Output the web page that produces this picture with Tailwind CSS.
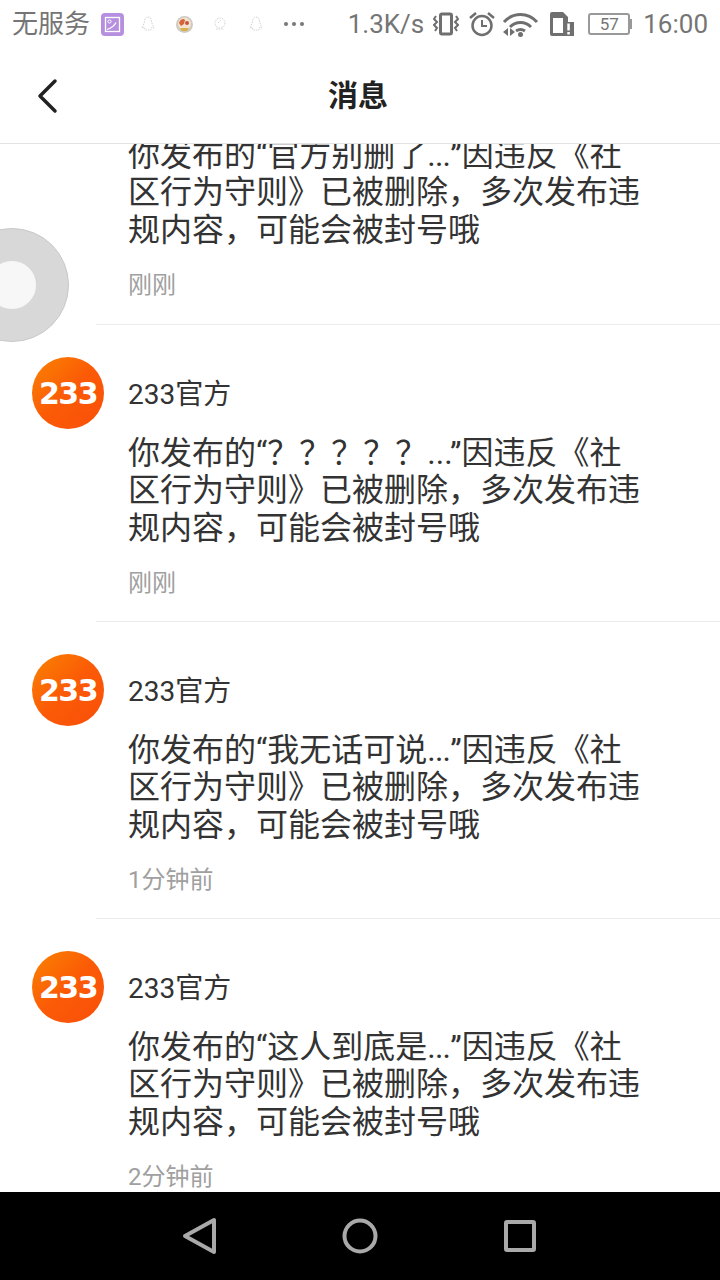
<!DOCTYPE html>
<html lang="zh-CN">
<head>
  <meta charset="UTF-8">
  <meta name="viewport" content="width=device-width, initial-scale=1.0">
  <title>消息</title>
  <script src="https://cdn.jsdelivr.net/npm/@tailwindcss/browser@4"></script>
</head>
<body class="bg-white font-['Roboto','Noto_Sans_CJK_SC',sans-serif] text-[#333]">
  <div class="relative w-[720px] h-[1280px] flex flex-col overflow-hidden">

    <!-- Status bar -->
    <div class="h-12 shrink-0 flex items-center justify-between pl-3 pr-3 text-[#757575] text-[26px]">
      <div class="flex items-center">
        <span>无服务</span>
        <svg class="ml-[11px] w-[23px] h-[23px]" viewBox="0 0 23 23">
          <rect x="0" y="0" width="23" height="23" rx="4" fill="#b78fe0"/>
          <rect x="4.500" y="4.500" width="14" height="14" fill="none" stroke="#fff" stroke-width="1.300"/>
          <circle cx="8.500" cy="8.500" r="1.600" fill="none" stroke="#fff" stroke-width="1"/>
          <path d="M6 16.500c3-1 7-3 9-7" fill="none" stroke="#fff" stroke-width="1.300"/>
        </svg>
        <svg class="ml-[17px] w-[14px] h-[16px]" viewBox="0 0 14 16" fill="none" stroke="#d4d4d4" stroke-dasharray="1.500 1">
          <path d="M7 1c2.500 0 3.500 2 3.500 5l2.500 6-2.500-.5-.5 2.500H4l-.5-2.500-2.500.5 2.500-6C3.500 3 4.500 1 7 1z"/>
        </svg>
        <svg class="ml-[21px] w-[17px] h-[17px]" viewBox="0 0 17 17">
          <circle cx="8.500" cy="8.500" r="8.500" fill="#cfcabf"/>
          <circle cx="8.500" cy="8" r="6.500" fill="#f3e4d2"/>
          <path d="M3 7c1-4 5-5 6-3l-1 4-3 2z" fill="#d8643a"/>
          <circle cx="11" cy="7" r="2" fill="#c9553a"/>
          <path d="M4 12h9l-2 3H6z" fill="#d9b24a"/>
        </svg>
        <svg class="ml-[20px] w-[14px] h-[16px]" viewBox="0 0 14 16" fill="none" stroke="#d4d4d4" stroke-dasharray="1.500 1">
          <circle cx="7" cy="7" r="5"/><path d="M5 7l3-3M3 13h8"/>
        </svg>
        <svg class="ml-[22px] w-[14px] h-[16px]" viewBox="0 0 14 16" fill="none" stroke="#d4d4d4" stroke-dasharray="1.500 1">
          <path d="M7 1c2.500 0 3.500 2 3.500 5l2.500 6-2.500-.5-.5 2.500H4l-.5-2.500-2.500.5 2.500-6C3.500 3 4.500 1 7 1z"/>
        </svg>
        <div class="ml-[21px] flex gap-[4px]">
          <div class="w-[4px] h-[4px] rounded-full bg-[#777]"></div>
          <div class="w-[4px] h-[4px] rounded-full bg-[#777]"></div>
          <div class="w-[4px] h-[4px] rounded-full bg-[#777]"></div>
        </div>
      </div>
      <div class="flex items-center">
        <span>1.3K/s</span>
        <svg class="ml-[9px] w-[26px] h-[24px]" viewBox="0 0 26 24" fill="none" stroke="#6f6f6f" stroke-width="2">
          <rect x="7.500" y="2" width="11" height="20" rx="1.500" stroke-width="3"/>
          <path d="M3 4l-2 3 3 3-3 3 3 3-2 3M23 4l2 3-3 3 3 3-3 3 2 3"/>
        </svg>
        <svg class="ml-[10px] w-[26px] h-[26px]" viewBox="0 0 26 26" fill="none" stroke="#6f6f6f" stroke-width="2.500">
          <circle cx="13" cy="14.500" r="9.500"/>
          <path d="M13 9v6h5" stroke-width="2"/>
          <path d="M1 7l6-5M25 7l-6-5" stroke-width="2.500"/>
        </svg>
        <svg class="ml-[7px] w-[37px] h-[26px]" viewBox="0 0 37 26" fill="none" stroke="#6f6f6f" stroke-width="3">
          <path d="M2 11c9-10 24-10 33 0"/>
          <path d="M8 16c6-6 15-6 21 0"/>
          <path d="M14 20c3-2 6-2 9 0"/>
          <circle cx="18.500" cy="23.500" r="2.500" fill="#6f6f6f" stroke="none"/>
          <path d="M6 17v8l-5-4zM8 17l5 4-5 4z" fill="#6f6f6f" stroke="none"/>
        </svg>
        <svg class="ml-[11px] w-[24px] h-[24px]" viewBox="0 0 24 24">
          <path d="M2 0h11l5 5v5h-5v14H2a2 2 0 0 1-2-2V2a2 2 0 0 1 2-2z" fill="#6f6f6f"/>
          <rect x="3" y="6" width="10" height="15" fill="#fff"/>
          <rect x="13" y="10" width="11" height="14" fill="#6f6f6f"/>
          <rect x="17.300" y="11.500" width="2.500" height="7" fill="#fff"/>
          <rect x="17.300" y="20" width="2.500" height="2.500" fill="#fff"/>
        </svg>
        <div class="ml-[14px] flex items-center">
          <div class="w-[42px] h-[22px] border-2 border-[#999] rounded-[3px] flex items-center justify-center text-[17px] leading-none text-[#757575]">57</div>
          <div class="w-[2px] h-[10px] bg-[#999]"></div>
        </div>
        <span class="ml-[11px]">16:00</span>
      </div>
    </div>

    <!-- Header -->
    <div class="relative h-[96px] shrink-0 flex items-center justify-center border-b border-[#e3e3e3]">
      <svg class="absolute left-[36px] top-[30px] w-6 h-9" viewBox="0 0 24 36" fill="none" stroke="#222" stroke-width="3.500" stroke-linecap="round" stroke-linejoin="round">
        <path d="M19 3L4 18l15 15"/>
      </svg>
      <h1 class="text-[30px] font-bold text-[#222] pr-1">消息</h1>
    </div>

    <!-- Message list -->
    <div class="flex-1 min-h-0 overflow-hidden">
      <div class="mt-[-117px]">
        <div class="flex pl-8 h-[297px] pt-8">
          <div class="w-[72px] h-[72px] shrink-0"></div>
          <div class="ml-6 flex-1 flex flex-col">
            <div class="h-[72px]"></div>
            <p class="text-[32px] leading-[37.300px] text-[#333] whitespace-nowrap mt-[6px]">你发布的“官方别删了<span class="tracking-[-0.800px]">...</span>”因违反《社<br>区行为守则》已被删除，多次发布违<br>规内容，可能会被封号哦</p>
            <div class="mt-[18px] text-[24px] leading-9 text-[#a0a0a0]">刚刚</div>
          </div>
        </div>

        <div class="ml-24 h-px bg-[#ececec]"></div>
        <div class="flex pl-8 h-[296px] pt-8">
          <div class="w-[72px] h-[72px] shrink-0 rounded-full bg-gradient-to-br from-[#f98200] via-[#fb5a06] to-[#f94f0a] flex items-center justify-center text-white text-[30px] font-bold tracking-[-1.500px] font-['DejaVu_Sans',sans-serif]">233</div>
          <div class="ml-6 flex-1 flex flex-col">
            <div class="h-[72px] flex items-center text-[28px] leading-none text-[#333] pt-[4px]">233官方</div>
            <p class="text-[32px] leading-[37.300px] text-[#333] whitespace-nowrap mt-[6px]">你发布的“？？？？？...”因违反《社<br>区行为守则》已被删除，多次发布违<br>规内容，可能会被封号哦</p>
            <div class="mt-[18px] text-[24px] leading-9 text-[#a0a0a0]">刚刚</div>
          </div>
        </div>

        <div class="ml-24 h-px bg-[#ececec]"></div>
        <div class="flex pl-8 h-[296px] pt-8">
          <div class="w-[72px] h-[72px] shrink-0 rounded-full bg-gradient-to-br from-[#f98200] via-[#fb5a06] to-[#f94f0a] flex items-center justify-center text-white text-[30px] font-bold tracking-[-1.500px] font-['DejaVu_Sans',sans-serif]">233</div>
          <div class="ml-6 flex-1 flex flex-col">
            <div class="h-[72px] flex items-center text-[28px] leading-none text-[#333] pt-[4px]">233官方</div>
            <p class="text-[32px] leading-[37.300px] text-[#333] whitespace-nowrap mt-[6px]">你发布的“我无话可说<span class="tracking-[-0.800px]">...</span>”因违反《社<br>区行为守则》已被删除，多次发布违<br>规内容，可能会被封号哦</p>
            <div class="mt-[18px] text-[24px] leading-9 text-[#a0a0a0]">1分钟前</div>
          </div>
        </div>

        <div class="ml-24 h-px bg-[#ececec]"></div>
        <div class="flex pl-8 h-[296px] pt-8">
          <div class="w-[72px] h-[72px] shrink-0 rounded-full bg-gradient-to-br from-[#f98200] via-[#fb5a06] to-[#f94f0a] flex items-center justify-center text-white text-[30px] font-bold tracking-[-1.500px] font-['DejaVu_Sans',sans-serif]">233</div>
          <div class="ml-6 flex-1 flex flex-col">
            <div class="h-[72px] flex items-center text-[28px] leading-none text-[#333] pt-[4px]">233官方</div>
            <p class="text-[32px] leading-[37.300px] text-[#333] whitespace-nowrap mt-[6px]">你发布的“这人到底是<span class="tracking-[-0.800px]">...</span>”因违反《社<br>区行为守则》已被删除，多次发布违<br>规内容，可能会被封号哦</p>
            <div class="mt-[18px] text-[24px] leading-9 text-[#a0a0a0]">2分钟前</div>
          </div>
        </div>
      </div>
    </div>

    <!-- Nav bar -->
    <div class="h-[88px] shrink-0 bg-black flex items-center justify-center gap-[112px]">
      <svg class="w-12 h-12" viewBox="0 0 48 48" fill="none" stroke="#a9a9a9" stroke-width="4" stroke-linejoin="round">
        <path d="M38 8v32L9 24z"/>
      </svg>
      <svg class="w-12 h-12" viewBox="0 0 48 48" fill="none" stroke="#a9a9a9" stroke-width="4">
        <circle cx="24" cy="24" r="15.500"/>
      </svg>
      <svg class="w-12 h-12" viewBox="0 0 48 48" fill="none" stroke="#a9a9a9" stroke-width="4" stroke-linejoin="round">
        <rect x="10" y="10" width="28" height="28" rx="1"/>
      </svg>
    </div>

    <!-- Floating ball -->
    <div class="absolute left-[-45px] top-[228px] w-[114px] h-[114px] rounded-full bg-[#d8d8d8] border border-[#c9c9c9] flex items-center justify-center">
      <div class="w-12 h-12 rounded-full bg-[#f7f7f7]"></div>
    </div>
  </div>
</body>
</html>
